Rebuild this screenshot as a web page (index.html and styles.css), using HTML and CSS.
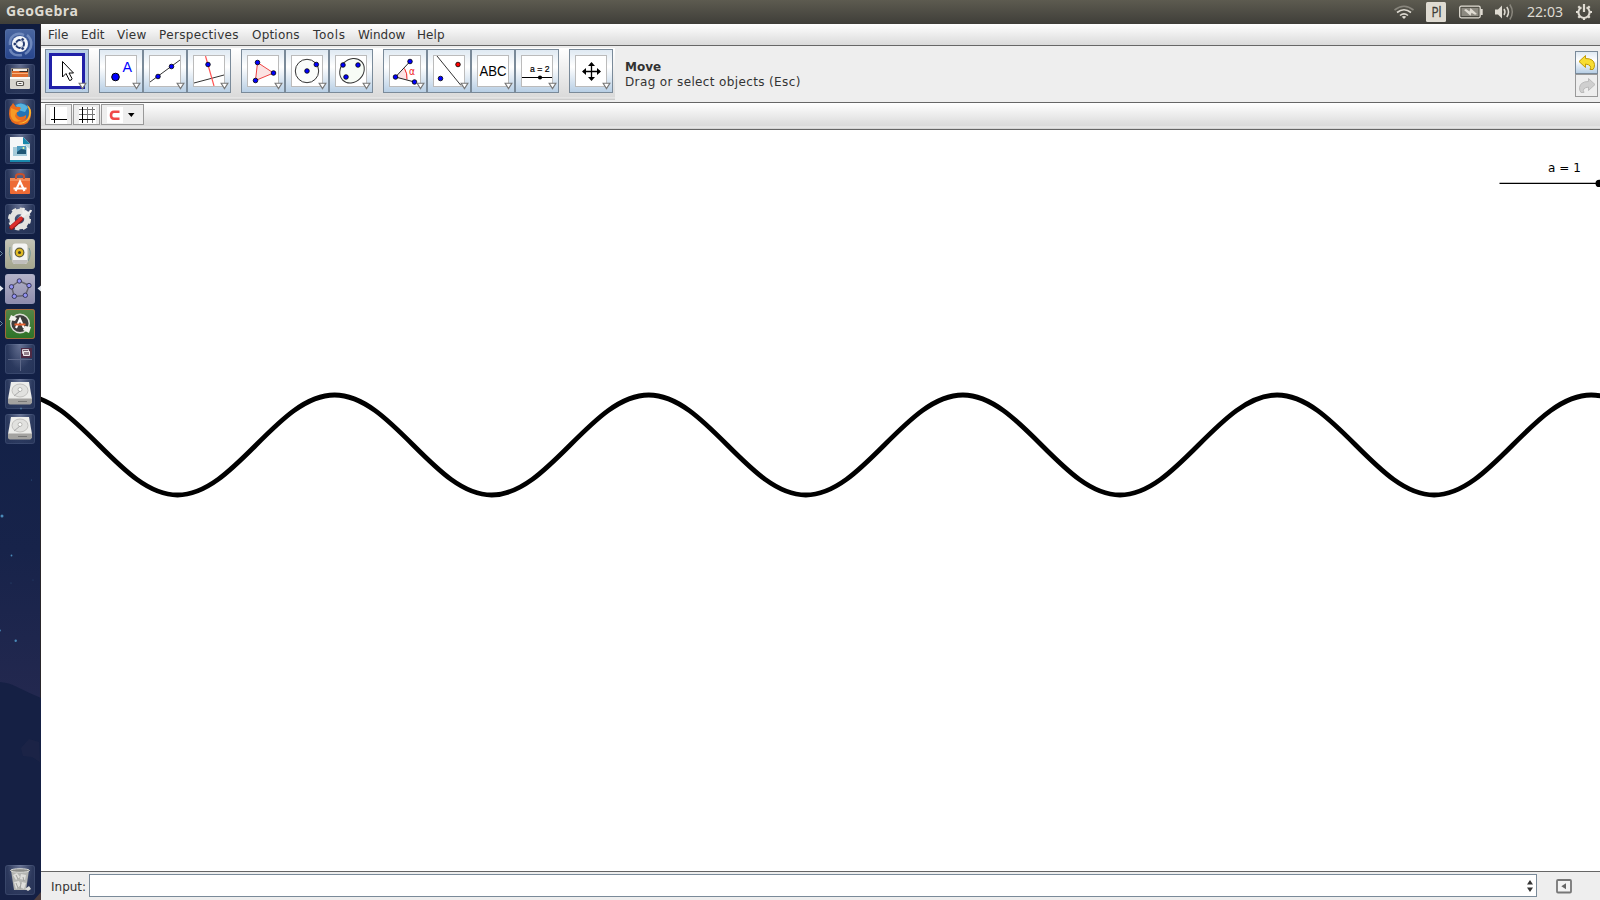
FILE: index.html
```html
<!DOCTYPE html>
<html lang="en">
<head>
<meta charset="utf-8">
<title>GeoGebra</title>
<link rel="stylesheet" href="styles.css">
</head>
<body>
<div class="desktop">
<header class="panel">
  <span class="app-title">GeoGebra</span>
  <svg class="indicators" width="220" height="24" viewBox="1380 0 220 24">
    <g fill="none" stroke="#dfdbd2" stroke-width="1.6">
      <path stroke="#89867d" d="M1394.500 10Q1404 2.500 1413.500 10"/>
      <path d="M1397 12.500Q1404 7 1411 12.500M1400 15.500Q1404 12.200 1408 15.500"/>
    </g>
    <path fill="#dfdbd2" d="M1401.800 16.700Q1404 15.500 1406.200 16.700L1404 19z"/>
    <rect x="1426" y="2" width="20" height="20" rx="1.500" fill="#dfdbd2"/>
    <text class="layout-text" x="1431.500" y="17" textLength="10" lengthAdjust="spacingAndGlyphs">Pl</text>
    <rect x="1459.700" y="6.200" width="20.500" height="11.600" rx="1.500" fill="none" stroke="#dfdbd2" stroke-width="1.300"/>
    <rect x="1461.500" y="8" width="17" height="8" fill="#8c8980"/>
    <path fill="#dfdbd2" d="M1480.500 9h2.200v6h-2.200zM1464 10l2-1 3.500 2.500 1-3.500 6.500 6-2 .8-3.500-2-1 3z"/>
    <path fill="#dfdbd2" d="M1495 9.500h3l4-4v13l-4-4h-3z"/>
    <g fill="none" stroke="#dfdbd2" stroke-width="1.500"><path d="M1504 9q2 3 0 6M1506.800 7q3.400 5 0 10"/><path stroke="#89867d" d="M1509.800 4.500q5 7.500 0 15"/></g>
    <text class="clock" x="1527" y="17" textLength="36" lengthAdjust="spacingAndGlyphs">22:03</text>
    <g fill="none" stroke="#dfdbd2"><path stroke-width="2" d="M1581.500 7.300a5.600 5.600 0 1 0 5 0"/><path stroke-width="2.200" d="M1584 4v8M1576 12h2.500M1589.500 12h2.500M1584 17.500v2.500M1578.300 6.300l1.800 1.800M1589.700 6.300l-1.800 1.800M1578.300 17.700l1.800-1.800M1589.700 17.700l-1.800-1.800"/></g>
  </svg>
</header>

<div class="workspace">
<nav class="launcher">
  <svg class="sky" width="41" height="876" viewBox="0 24 41 876">
    <path fill="#152044" d="M0 682q10 1 15 4 14 7 26 12v202H0z"/>
    <path fill="#272b4b" opacity=".35" d="M21 748l8-9 10 3 1 20-8-5-9-1z"/>
    <g fill="#4a8ab8"><circle cx="2" cy="516" r="1.500"/><circle cx="11.500" cy="555.500" r=".9"/><circle cx="15.700" cy="640.700" r="1.200"/><circle cx="0" cy="630.500" r=".9"/><circle cx="31.500" cy="480" r=".6" opacity=".5"/><circle cx="11" cy="583" r=".5" opacity=".5"/><circle cx="33" cy="580" r=".5" opacity=".4"/><circle cx="21" cy="408.500" r="1" opacity=".7"/></g>
    <path fill="#7b5539" opacity=".55" d="M34 900l7-8v8z"/>
  </svg>
  <div class="tiles">
    <svg class="tile tile-home" viewBox="0 0 30 30"><g fill="none" stroke="#8098c8" stroke-width="2.500" opacity=".75"><path d="M5 16C4 8 11 2 19 6M22 6c6 5 6 14-2 19M17 26c-6 1-11-1-12-6"/></g><circle cx="15" cy="15" r="8" fill="#f4f6fb"/><circle cx="15" cy="15" r="4" fill="none" stroke="#23396f" stroke-width="2"/><g fill="#23396f" stroke="#fff" stroke-width=".7"><circle cx="9.800" cy="15" r="1.800"/><circle cx="17.600" cy="10.500" r="1.800"/><circle cx="17.600" cy="19.500" r="1.800"/></g></svg>
    <svg class="tile" viewBox="0 0 30 30"><path fill="#8a8680" d="M6 4h18l1 11H5z"/><path fill="#3d3129" d="M7 5h16v9H7z"/><path fill="#f4efe6" d="M8 5h14v2H8z"/><path fill="#df6c2d" d="M7 7h7l1 1h8v6H7z"/><path fill="#f9b27b" d="M7 9h16v1H7z"/><rect x="5" y="13" width="20" height="12" rx="1" fill="#d8d6cf"/><path fill="#faf9f5" d="M5 13h20v2H5z"/><rect x="11.500" y="17.500" width="7" height="4" rx="1" fill="#f8f8f6" stroke="#57544e" stroke-width="1.200"/><path fill="#57544e" d="M13.500 19h3v1h-3z"/></svg>
    <svg class="tile" viewBox="0 0 30 30"><circle cx="15.500" cy="14.500" r="10.500" fill="#2373b5"/><path fill="#56b4e0" d="M11 6Q17 2 23 8l-3 5-7-2z"/><path fill="#e96b1d" d="M5 8q2-2 3-4l3 4q3-1 5 1l-2 3-2 1q-1 4 3 5 4 0 6-2 1 4-3 5 6-1 6-8 0-5-2-7 5 3 4 10-1 10-11 10Q4 25 4 15q0-4 1-7z"/><path fill="#f9bd30" d="M22 6q6 4 3 12-4 8-12 6 9 0 11-7 1-6-2-11z"/><path fill="#f79a25" d="M6 9l5 2 3 1-3 2-1 3q2 5 7 4-4 3-8 1-5-4-3-13z"/></svg>
    <svg class="tile" viewBox="0 0 30 30"><path fill="#f5f7f8" d="M5 3h13l7 7v17H5z"/><path fill="#1989ad" d="M18 3l7 7h-7z"/><path fill="#b9d4de" d="M18 10h7v5z"/><path fill="#a4cad9" d="M8 13h14v9H8z"/><path fill="#4f9bbf" d="M12 12h9v8h-9z"/><path fill="#1f5674" d="M12 18l4-3 5 1v4h-9z"/><circle cx="18.500" cy="14" r="1" fill="#ef9"/><path fill="#1989ad" d="M5 26h20v2H5z"/></svg>
    <svg class="tile" viewBox="0 0 30 30"><path fill="#ed6b35" d="M5 9h20v15q0 1-1 1H6q-1 0-1-1z"/><path fill="#f28b58" d="M5 9h20v3H5z"/><path fill="none" stroke="#c8502b" stroke-width="2" d="M11 10V7q0-2 4-2t4 2v3"/><path fill="none" stroke="#fff" stroke-width="2.200" d="M10.500 22L15 12.500l4.500 9.500"/><path stroke="#fff" stroke-width="1.800" d="M8.500 19.500h13"/></svg>
    <svg class="tile" viewBox="0 0 30 30"><circle cx="14.500" cy="15" r="7.500" fill="none" stroke="#e3e3e0" stroke-width="5.500"/><circle cx="14.500" cy="15" r="10.300" fill="none" stroke="#e3e3e0" stroke-width="2.500" stroke-dasharray="4.500 3.590"/><path stroke="#efefee" stroke-width="3.600" d="M14 16l8-9"/><path fill="none" stroke="#efefee" stroke-width="2.200" d="M19 4q-2 5 2 5 4 1 5-3"/><path stroke="#921515" stroke-width="4.600" stroke-linecap="round" d="M6.500 23.500l9.500-8.500"/><path stroke="#dc2d2b" stroke-width="3.200" stroke-linecap="round" d="M6.500 23l9.500-8.500"/></svg>
    <svg class="tile tile-player" viewBox="0 0 30 30"><path fill="none" stroke="#739797" stroke-width="1" d="M5 8q-2 6 1 13M24 9q3 6-1 13"/><rect x="7.500" y="4.500" width="15" height="20.500" rx="3" fill="#f4f4f3"/><path fill="#c0bfbd" d="M7.500 21h15v2q-1 2-3 2h-9q-3 0-3-3z"/><circle cx="14.500" cy="13.500" r="4.900" fill="#5f5c3f"/><circle cx="14.500" cy="13.500" r="3.700" fill="#e1bb24"/><circle cx="14.500" cy="13.500" r="1.500" fill="#443f28"/></svg>
    <svg class="tile tile-geo" viewBox="0 0 30 30"><path fill="none" stroke="#666570" stroke-width="1.500" d="M14.300 7l10 4.500-4 10-11 1L6.500 12.500z"/><g fill="#9292f3" stroke="#30304e" stroke-width=".9"><circle cx="14.300" cy="7" r="2.200"/><circle cx="24" cy="11.500" r="2.200"/><circle cx="20.300" cy="21.300" r="2.200"/><circle cx="9.300" cy="22.300" r="2.200"/><circle cx="6.500" cy="12.800" r="2.200"/></g></svg>
    <svg class="tile tile-update" viewBox="0 0 30 30"><circle cx="15" cy="14.500" r="9.300" fill="#3d3d3b" stroke="#d9dcd3" stroke-width="1.500"/><path fill="#f2f2ed" d="M4 11l2-5 6 3-2 3zM26 18l-2 6-6-3 2-4z"/><path fill="none" stroke="#fff" stroke-width="2.100" d="M11 19l4-9 4 9"/><path stroke="#e66331" stroke-width="2" d="M9.500 15.500h11"/></svg>
    <svg class="tile" viewBox="0 0 30 30"><path stroke="#5c6788" d="M15.500 3v24M3 15.500h24"/><rect x="16" y="4" width="11" height="10" fill="#4f2a44"/><path fill="#75606d" stroke="#d8ced5" d="M17.500 5.500h6v4h-6z"/><path fill="#95818d" stroke="#f2ecef" d="M18.500 7.500h6v4h-6z"/></svg>
    <svg class="tile" viewBox="0 0 30 30"><path fill="#ededeb" d="M6 3h18l3 17v3H3v-3z"/><path fill="#a3a2a0" d="M3 19.500h24v4q-1 2-2 2H5q-2 0-2-2z"/><ellipse cx="15" cy="11.500" rx="8" ry="6.500" fill="#e1e1df" stroke="#c2c1bf"/><circle cx="15" cy="10.500" r="2" fill="#fff" stroke="#b7b7b4"/><path stroke="#aaa" d="M15 12l-6 5"/><path stroke="#777" d="M13 22.500h9"/></svg>
    <svg class="tile" viewBox="0 0 30 30"><path fill="#ededeb" d="M6 3h18l3 17v3H3v-3z"/><path fill="#a3a2a0" d="M3 19.500h24v4q-1 2-2 2H5q-2 0-2-2z"/><ellipse cx="15" cy="11.500" rx="8" ry="6.500" fill="#e1e1df" stroke="#c2c1bf"/><circle cx="15" cy="10.500" r="2" fill="#fff" stroke="#b7b7b4"/><path stroke="#aaa" d="M15 12l-6 5"/><path stroke="#777" d="M13 22.500h9"/></svg>
  </div>
  <svg class="tile tile-trash" viewBox="0 0 30 30"><path fill="#b4b5b2" d="M6 5h18l-3 20H9z"/><ellipse cx="15" cy="5.500" rx="9.500" ry="1.800" fill="#8a8b88" stroke="#d8d9d6"/><path fill="#dededb" d="M8 10l4-2 3 4-4 3zM16 9l5 1-1 5-5-1zM9 17l5-1 2 4-5 4zM17 17l4 1-2 6-4-2zM20 24l4-3 2 3-3 2z"/><path fill="none" stroke="#a0a19e" d="M11 10l2 4M18 12l1 4M11 18l2 5M16 18l-1 6"/></svg>
  <svg class="pips" width="41" height="120" viewBox="0 240 41 120"><path fill="none" stroke="#66899e" d="M0 251l2.500 2.500L0 256M0 321l2.500 2.500L0 326"/><path fill="#e6eaf0" d="M0 285.500l3.500 3L0 291.500zM41 285.500l-3.500 3 3.500 3z"/></svg>
</nav>

<main class="window">
  <nav class="menubar">
    <span class="m-file">File</span><span class="m-edit">Edit</span><span class="m-view">View</span><span class="m-persp">Perspectives</span><span class="m-opt">Options</span><span class="m-tools">Tools</span><span class="m-win">Window</span><span class="m-help">Help</span>
  </nav>

  <section class="toolbar">
    <div class="tools">
      <div class="group">
        <button class="tool selected"><svg class="icon" viewBox="0 0 30 30"><path fill="#fff" stroke="#000" d="M10.500 5.500v15.500l3.500-3.500 3.500 7q2.500 0 2.500-2l-3-5.500h4.500z"/></svg><svg class="drop" viewBox="0 0 8 7"><path d="M1 1h6L4 5.800z"/></svg></button>
      </div>
      <div class="group">
        <button class="tool"><svg class="icon" viewBox="0 0 30 30"><circle cx="9.500" cy="21" r="3.800" fill="#00f" stroke="#000"/><text class="ico-a" x="16.500" y="15.500" textLength="9.500" lengthAdjust="spacingAndGlyphs">A</text></svg><svg class="drop" viewBox="0 0 8 7"><path d="M1 1h6L4 5.800z"/></svg></button>
        <button class="tool"><svg class="icon" viewBox="0 0 30 30"><path stroke="#333" d="M0 26L30 4"/><g class="pt"><circle cx="8" cy="20.500" r="2.300"/><circle cx="21.500" cy="10.500" r="2.300"/></g></svg><svg class="drop" viewBox="0 0 8 7"><path d="M1 1h6L4 5.800z"/></svg></button>
        <button class="tool"><svg class="icon" viewBox="0 0 30 30"><path stroke="#333" d="M0 27L30 19"/><path stroke="#f55" stroke-width="1.200" d="M11.500 0L20 30"/><g class="pt"><circle cx="14" cy="8.500" r="2.300"/></g></svg><svg class="drop" viewBox="0 0 8 7"><path d="M1 1h6L4 5.800z"/></svg></button>
      </div>
      <div class="group">
        <button class="tool"><svg class="icon" viewBox="0 0 30 30"><path fill="#fbe3e3" stroke="#e44" d="M9.500 6.500L25.500 17 7.500 24.500z"/><g class="pt"><circle cx="9.500" cy="6.500" r="2.300"/><circle cx="25.500" cy="17" r="2.300"/><circle cx="7.500" cy="24.500" r="2.300"/></g></svg><svg class="drop" viewBox="0 0 8 7"><path d="M1 1h6L4 5.800z"/></svg></button>
        <button class="tool"><svg class="icon" viewBox="0 0 30 30"><circle cx="15" cy="15" r="11.700" fill="#fafcfa" stroke="#333"/><g class="pt"><circle cx="15" cy="15" r="2.300"/><circle cx="24.300" cy="8.500" r="2.300"/></g></svg><svg class="drop" viewBox="0 0 8 7"><path d="M1 1h6L4 5.800z"/></svg></button>
        <button class="tool"><svg class="icon" viewBox="0 0 30 30"><ellipse cx="16" cy="14.700" rx="13.200" ry="11.300" transform="rotate(-45 16 14.700)" fill="#f7fcf6" stroke="#333"/><g class="pt"><circle cx="7" cy="9" r="2.300"/><circle cx="22" cy="9" r="2.300"/><circle cx="10" cy="21" r="2.300"/></g></svg><svg class="drop" viewBox="0 0 8 7"><path d="M1 1h6L4 5.800z"/></svg></button>
      </div>
      <div class="group">
        <button class="tool"><svg class="icon" viewBox="0 0 30 30"><path fill="#fbe3e3" d="M5.500 21l9-8.500q3 5 2.500 11z"/><path fill="none" stroke="#e22" d="M14.500 12.500q3 5 2.500 11"/><path fill="none" stroke="#222" d="M20 5.500L5.500 21l19 5"/><text class="ico-alpha" x="19" y="18.500" textLength="6" lengthAdjust="spacingAndGlyphs">α</text><g class="pt"><circle cx="20" cy="5.500" r="2.300"/><circle cx="5.500" cy="21" r="2.300"/><circle cx="24.500" cy="26" r="2.300"/></g></svg><svg class="drop" viewBox="0 0 8 7"><path d="M1 1h6L4 5.800z"/></svg></button>
        <button class="tool"><svg class="icon" viewBox="0 0 30 30"><path stroke="#333" d="M3 0l24 29.500"/><g class="pt"><circle cx="6.500" cy="22.500" r="2.300"/><circle class="red" cx="24" cy="8.500" r="2.300"/></g></svg><svg class="drop" viewBox="0 0 8 7"><path d="M1 1h6L4 5.800z"/></svg></button>
        <button class="tool"><svg class="icon" viewBox="0 0 30 30"><text class="ico-abc" x="1.500" y="20" textLength="27" lengthAdjust="spacingAndGlyphs">ABC</text></svg><svg class="drop" viewBox="0 0 8 7"><path d="M1 1h6L4 5.800z"/></svg></button>
        <button class="tool"><svg class="icon" viewBox="0 0 30 30"><text class="ico-num" x="8" y="15.500" textLength="19.500" lengthAdjust="spacingAndGlyphs">a = 2</text><path stroke="#000" d="M0 21.500h30"/><circle cx="18" cy="21.500" r="2.100"/></svg><svg class="drop" viewBox="0 0 8 7"><path d="M1 1h6L4 5.800z"/></svg></button>
      </div>
      <div class="group">
        <button class="tool"><svg class="icon" viewBox="0 0 30 30"><path stroke="#000" stroke-width="1.300" d="M15.500 7v17M7 15.500h17"/><path d="M15.500 6l3.500 4h-7zM15.500 25l3.500-4h-7zM6 15.500l4-3.500v7zM25 15.500l-4-3.500v7z"/></svg><svg class="drop" viewBox="0 0 8 7"><path d="M1 1h6L4 5.800z"/></svg></button>
      </div>
    </div>
    <div class="help"><strong>Move</strong><span class="hint">Drag or select objects (Esc)</span></div>
    <div class="history">
      <button class="undo"><svg viewBox="0 0 21 21"><path fill="#f8dd32" stroke="#c09a08" d="M3 9.500l6.500-6v3q8.500 0 9 6 .2 3-1.500 5h-3q2.500-4.500-4.500-5.500v3.500z"/></svg></button>
      <button class="redo"><svg viewBox="0 0 21 21"><path fill="#cfcfcf" stroke="#bbb" d="M19 9.500l-6.500-6v3q-8 0-9 6-.2 3 1.500 5h3q-2.500-4.500 4.500-5.500v3.500z"/></svg></button>
    </div>
  </section>

  <section class="stylebar">
    <button class="sb"><svg width="25" height="19" viewBox="46 105 25 19"><path fill="#fff" d="M50 107h17v17H50z"/><path stroke="#000" d="M54.500 107v16M51 119.500h16"/></svg></button>
    <button class="sb"><svg width="25" height="19" viewBox="74 105 25 19"><path fill="#fff" d="M79 107h17v17H79z"/><path stroke="#777" d="M87.500 107v16M92.500 107v16M79 109.500h16M79 114.500h16"/><path stroke="#000" d="M82.500 107v16M79 119.500h16"/></svg></button>
    <button class="sb sb-wide"><svg width="41" height="19" viewBox="102 105 41 19"><path fill="#fff" d="M107 107h16v16h-16z"/><path fill="none" stroke="#f04848" stroke-width="2.600" d="M119.500 111.700h-5.500q-3 0-3 3.500t3 3.500h5.500"/><path fill="#000" d="M128 113h6.500l-3.200 4z"/></svg></button>
  </section>

  <section class="graphics">
    <svg width="1559" height="741" viewBox="41 130 1559 741">
      <path class="curve" transform="translate(.5 0)" d="M19.920 395C77.130 395 119.790 495 177 495S276.870 395 334.080 395 433.950 495 491.160 495 591.030 395 648.240 395 748.110 495 805.320 495 905.190 395 962.400 395 1062.270 495 1119.480 495 1219.350 395 1276.560 395 1376.430 495 1433.640 495 1533.510 395 1590.720 395 1690.590 495 1747.800 495"/>
      <path stroke="#000" stroke-width="1.300" d="M1499.500 183.400H1600"/>
      <circle cx="1599.200" cy="183.400" r="3.700"/>
      <text class="slider-label" x="1548" y="172" textLength="33">a = 1</text>
    </svg>
  </section>

  <footer class="inputbar">
    <label>Input:</label>
    <div class="field"><svg width="8" height="14" viewBox="0 0 8 14"><path fill="#333" d="M4 1l3 4.500H1zM4 13L1 8.500h6z"/></svg></div>
    <svg class="toggle" width="16" height="15" viewBox="0 0 16 15"><rect x="1" y="1" width="14" height="12.500" rx="1" fill="#f3f3f3" stroke="#777" stroke-width="1.800"/><path fill="#666" d="M10 4.200v6L5.300 7.200z"/></svg>
  </footer>
</main>
</div>
</div>
</body>
</html>
```
FILE: styles.css
```css
* { box-sizing: border-box; }
body { margin: 0; background: #fff; font-family: "DejaVu Sans", sans-serif; color: #333; overflow: hidden; }
button { margin: 0; padding: 0; font: inherit; }
svg { display: block; flex: none; }
.desktop { width: 1600px; height: 900px; display: flex; flex-direction: column; }

.panel { height: 24px; flex: none; display: flex; align-items: center; justify-content: space-between; padding-left: 6px; background: linear-gradient(#5d5b50, #3f3e39); }
.app-title { font: bold 14px/22px "Open Sans", sans-serif; letter-spacing: .4px; color: #dfdbd2; padding-bottom: 2px; }
.layout-text { font: 500 14px "Open Sans", sans-serif; fill: #3c3b37; stroke: #3c3b37; stroke-width: .3px; }
.clock { font: 14px "Noto Sans", sans-serif; fill: #dfdbd2; }

.workspace { flex: 1; display: flex; min-height: 0; }
.launcher { position: relative; width: 41px; flex: none; display: flex; flex-direction: column; justify-content: space-between; padding: 5px 5px; background: linear-gradient(#0f1b3e, #132147 45%, #17234a 60%, #252950 80%, #152044); border-right: 1px solid #29262b; }
.sky, .pips { position: absolute; left: 0; top: 0; }
.pips { top: 216px; }
.tiles { position: relative; display: flex; flex-direction: column; gap: 5px; }
.tile { position: relative; width: 30px; height: 30px; border-radius: 3px; background: radial-gradient(ellipse at 50% 0, rgba(160,170,200,.6), rgba(100,115,150,.3) 60%, rgba(90,105,140,.24)); box-shadow: inset 0 0 0 1px rgba(150,165,200,.15); }
.tile-home { background: linear-gradient(#4a66a0, #27458c); }
.tile-player { background: linear-gradient(#c3c3b6, #a3a58d); }
.tile-geo { background: linear-gradient(#b4b3c8, #8d8bad); }
.tile-update { background: linear-gradient(#568447, #2c7327); box-shadow: inset 0 0 0 1px #a36a3c; }

.window { flex: 1; min-width: 0; display: flex; flex-direction: column; background: #eee; }
.menubar { height: 22px; flex: none; display: flex; padding: 1px 0 0 7px; font-size: 12px; line-height: 21px; border-bottom: 1px solid #666; background: linear-gradient(#fff, #dadada); }
.m-file { width: 33px; letter-spacing: .1px; }
.m-edit { width: 36px; letter-spacing: .1px; }
.m-view { width: 42px; letter-spacing: .25px; }
.m-persp { width: 93px; letter-spacing: .35px; }
.m-opt { width: 61px; letter-spacing: .2px; }
.m-tools { width: 45px; letter-spacing: .6px; }
.m-win { width: 59px; }
.m-help { letter-spacing: .1px; }

.toolbar { height: 57px; flex: none; display: flex; border-bottom: 1px solid #666; }
.tools { width: 574px; height: 54px; display: flex; gap: 10px; padding: 3px 0 0 4px; background: linear-gradient(#eee 0 2px, #fff 2px, #dadada 51px, #eee 52px, #ccc 53px); }
.group { display: flex; }
.tool { position: relative; width: 44px; height: 44px; display: grid; place-items: center; border: 1px solid #7a8a99; background: linear-gradient(#dfe9f2, #fff 40%, #b8cfe5); }
.icon { width: 32px; height: 32px; border: 1px solid #bbb; background: #fff; overflow: hidden; }
.selected { background: #b8cfe5; }
.selected .icon { width: 36px; height: 36px; padding: 0; border: 3px solid #2020a8; }
.drop { position: absolute; right: 1px; bottom: 2px; width: 9px; height: 8px; fill: #fff; stroke: #777; }
.pt { fill: #00f; stroke: #000; stroke-width: .8px; }
.red { fill: #f00; }
.ico-a { font: 14px "Liberation Sans", sans-serif; fill: #00f; }
.ico-alpha { font: 11px "DejaVu Sans", sans-serif; fill: #e22; }
.ico-abc { font: 14px "Liberation Sans", sans-serif; }
.ico-num { font: 9px "Liberation Sans", sans-serif; stroke: #000; stroke-width: .2px; }
.help { flex: 1; display: flex; flex-direction: column; padding: 14px 0 0 10px; font-size: 12px; line-height: 15px; }
.hint { letter-spacing: .37px; }
.history { width: 25px; padding-top: 5px; }
.undo, .redo { display: block; width: 23px; height: 23px; border: 1px solid #7a8a99; background: linear-gradient(#dfe9f2, #fff 40%, #b8cfe5); }
.redo { border-color: #999; background: #eee; }

.stylebar { height: 27px; flex: none; display: flex; gap: 1px; padding: 1px 0 0 4px; border-bottom: 1px solid #666; background: linear-gradient(#fff, #dadada 23px, #eee 24px, #ccc 26px); }
.sb { width: 27px; height: 21px; border: 1px solid #999; background: #eee; }
.sb-wide { width: 43px; }

.graphics { flex: 1; min-height: 0; background: #fff; }
.curve { fill: none; stroke: #000; stroke-width: 4.8px; }
.slider-label { font: 12px "DejaVu Sans", sans-serif; }

.inputbar { height: 29px; flex: none; display: flex; border-top: 1px solid #666; }
.inputbar label { width: 48px; padding: 1px 0 0 10px; font-size: 12px; line-height: 29px; }
.field { width: 1448px; height: 23px; margin-top: 2px; display: flex; justify-content: flex-end; align-items: center; padding-right: 2px; background: #fff; border: 1px solid #7a8a99; }
.toggle { margin: 7px 0 0 19px; }
```
